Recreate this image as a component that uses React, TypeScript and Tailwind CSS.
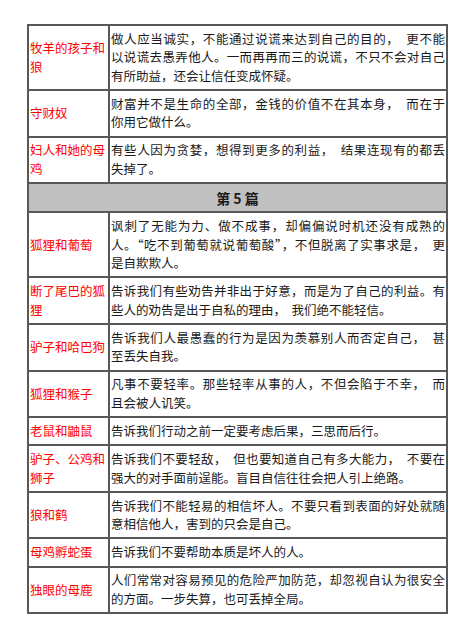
const rows: { title: string[]; lines: string[] }[] = [
  {
    title: ["牧羊的孩子和", "狼"],
    lines: [
      "做人应当诚实，不能通过说谎来达到自己的目的，  更不能",
      "以说谎去愚弄他人。一而再再而三的说谎，不只不会对自己",
      "有所助益，还会让信任变成怀疑。",
    ],
  },
  {
    title: ["守财奴"],
    lines: ["财富并不是生命的全部，金钱的价值不在其本身，  而在于", "你用它做什么。"],
  },
  {
    title: ["妇人和她的母", "鸡"],
    lines: ["有些人因为贪婪，想得到更多的利益，  结果连现有的都丢", "失掉了。"],
  },
]

const rows5: { title: string[]; lines: string[] }[] = [
  {
    title: ["狐狸和葡萄"],
    lines: [
      "讽刺了无能为力、做不成事，却偏偏说时机还没有成熟的",
      "人。“吃不到葡萄就说葡萄酸”，不但脱离了实事求是，  更",
      "是自欺欺人。",
    ],
  },
  {
    title: ["断了尾巴的狐", "狸"],
    lines: [
      "告诉我们有些劝告并非出于好意，而是为了自己的利益。有",
      "些人的劝告是出于自私的理由，  我们绝不能轻信。",
    ],
  },
  {
    title: ["驴子和哈巴狗"],
    lines: ["告诉我们人最愚蠢的行为是因为羡慕别人而否定自己，  甚", "至丢失自我。"],
  },
  {
    title: ["狐狸和猴子"],
    lines: ["凡事不要轻率。那些轻率从事的人，不但会陷于不幸，  而", "且会被人讥笑。"],
  },
  {
    title: ["老鼠和鼬鼠"],
    lines: ["告诉我们行动之前一定要考虑后果，三思而后行。"],
  },
  {
    title: ["驴子、公鸡和", "狮子"],
    lines: [
      "告诉我们不要轻敌，  但也要知道自己有多大能力，  不要在",
      "强大的对手面前逞能。盲目自信往往会把人引上绝路。",
    ],
  },
  {
    title: ["狼和鹤"],
    lines: [
      "告诉我们不能轻易的相信坏人。不要只看到表面的好处就随",
      "意相信他人，害到的只会是自己。",
    ],
  },
  {
    title: ["母鸡孵蛇蛋"],
    lines: ["告诉我们不要帮助本质是坏人的人。"],
  },
  {
    title: ["独眼的母鹿"],
    lines: [
      "人们常常对容易预见的危险严加防范，却忽视自认为很安全",
      "的方面。一步失算，也可丢掉全局。",
    ],
  },
]

function Row({ title, lines }: { title: string[]; lines: string[] }) {
  return (
    <tr>
      <td className="border-2 border-[#585858] align-middle pl-[1px] py-[3.8px] text-[#ff0000]">
        {title.map((t) => (
          <div key={t} className="whitespace-nowrap">
            {t}
          </div>
        ))}
      </td>
      <td className="border-2 border-[#585858] align-top pl-[1px] pr-[1px] py-[3.8px] text-[#1a1a1a]">
        {lines.map((l, i) => (
          <div
            key={i}
            className={
              i < lines.length - 1
                ? "whitespace-pre text-justify [text-align-last:justify]"
                : "whitespace-pre"
            }
          >
            {l}
          </div>
        ))}
      </td>
    </tr>
  )
}

export default function App() {
  return (
    <div
      className="w-[475px] h-[635px] bg-white pl-[27px] pt-[24px] text-[12.5px] leading-[18.5px]"
      style={{ fontFamily: '"Noto Sans CJK SC", "Noto Sans", sans-serif' }}
    >
      <table className="w-[421px] border-collapse table-fixed">
        <colgroup>
          <col className="w-[81px]" />
          <col />
        </colgroup>
        <tbody>
          {rows.map((r) => (
            <Row key={r.title.join("")} {...r} />
          ))}

          {/* section header */}
          <tr>
            <td
              colSpan={2}
              className="border-2 border-[#585858] bg-[#c0c0c0] text-center font-bold text-[14px] text-[#1a1a1a] h-[29px] py-0"
            >
              第 5 篇
            </td>
          </tr>

          {rows5.map((r) => (
            <Row key={r.title.join("")} {...r} />
          ))}
        </tbody>
      </table>
    </div>
  )
}
